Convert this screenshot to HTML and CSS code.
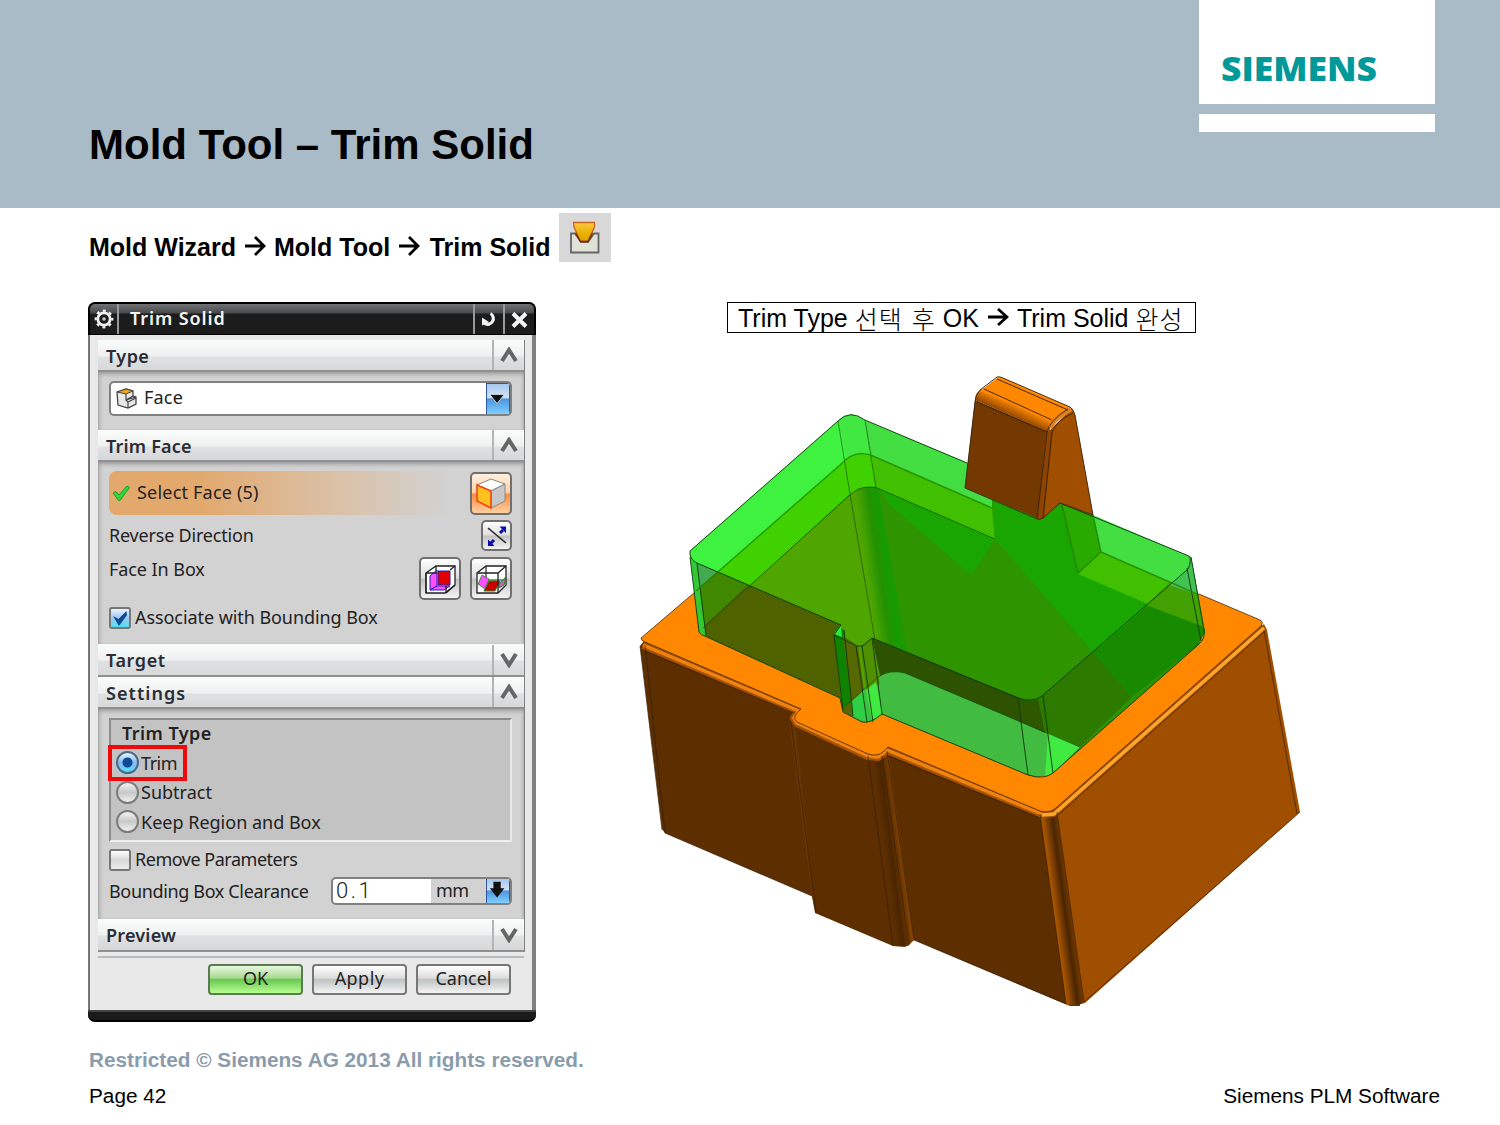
FILE: index.html
```html
<!DOCTYPE html>
<html lang="ko">
<head>
<meta charset="utf-8">
<title>Mold Tool – Trim Solid</title>
<link rel="stylesheet" href="styles.css">
</head>
<body>
<div class="slide">
  <header class="banner">
    <h1 class="title"><span class="t">Mold Tool – Trim Solid</span></h1>
    <div class="brand">
      <div class="brand-box">
        <svg class="brand-logo" width="200" height="60" viewBox="0 0 200 60"><text x="0" y="40.500" textLength="156" lengthAdjust="spacingAndGlyphs">SIEMENS</text></svg>
      </div>
      <div class="brand-strip"></div>
    </div>
  </header>

  <div class="path">
    <span class="t">Mold Wizard</span>
    <svg class="arrow" width="22" height="22" viewBox="0 0 22 22"><path d="M1 11H20M11 2L20 11L11 20"/></svg>
    <span class="t">Mold Tool</span>
    <svg class="arrow second" width="22" height="22" viewBox="0 0 22 22"><path d="M1 11H20M11 2L20 11L11 20"/></svg>
    <span class="t">Trim Solid</span>
    <div class="tool">
      <svg width="52" height="49" viewBox="0 0 52 49">
        <defs><linearGradient id="gold" x2="0" y2="1"><stop offset="0" stop-color="#ffc845"/><stop offset=".6" stop-color="#e9b000"/><stop offset="1" stop-color="#d9a400"/></linearGradient></defs>
        <path d="M12 20.500H16L22 29H29L35 20.500H39.500V39.500H12Z" fill="#dfe2d6" stroke="#666" stroke-width="1.800"/>
        <path d="M14.500 9.500H35.500V14L29 28.500H21.500L15 14Z" fill="url(#gold)" stroke="#c8641e" stroke-width="1.300"/>
        <path d="M16.500 20L21.500 28.500H29L33.500 20" fill="none" stroke="#7c2600" stroke-width="1.400"/>
      </svg>
    </div>
  </div>

  <main class="content">
    <section class="dialog">
      <div class="titlebar">
        <div class="tb-icon gear"><svg width="22" height="22" viewBox="0 0 22 22"><circle cx="11" cy="11" r="6.200" fill="none" stroke="#f2f2f2" stroke-width="2.800"/><circle cx="11" cy="11" r="8.300" fill="none" stroke="#f2f2f2" stroke-width="2.200" stroke-dasharray="3 3.520" stroke-dashoffset="1.500"/><circle cx="11" cy="11" r="1.800" fill="#ccc"/></svg></div>
        <div class="tb-name"><span class="t ls-9">Trim Solid</span></div>
        <div class="tb-icon"><svg width="20" height="20" viewBox="0 0 20 20"><path d="M11.500 4.500A5 5 0 1 1 5.500 14.500" fill="none" stroke="#f2f2f2" stroke-width="3.200"/><path d="M3 8.500V16.500L10 13Z" fill="#f2f2f2"/></svg></div>
        <div class="tb-icon last"><svg width="20" height="20" viewBox="0 0 20 20"><path d="M4 4.500L17 17.500M17 4.500L4 17.500" stroke="#f4f4f4" stroke-width="4"/></svg></div>
      </div>
      <div class="panel">
        <div class="head"><b class="t ls-4">Type</b><i><svg width="20" height="16" viewBox="0 0 20 16"><path d="M3 14L10 3L17 14"/></svg></i></div>
        <div class="body type">
          <div class="combo">
            <svg class="combo-icon" width="24" height="24" viewBox="0 0 24 24"><path d="M2 5L11 2L18 4V9L21 10V17L13 21L3 18Z" fill="#e8e8e8" stroke="#444" stroke-width="1.300"/><path d="M2 5L11 2L18 4L11 7Z" fill="#f0a818" stroke="#444"/><path d="M11 7V13L21 10M11 13L13 15V21M18 9L11 13M13 15L21 11" fill="none" stroke="#444" stroke-width="1.200"/></svg>
            <span class="t ls-2">Face</span>
            <svg class="drop" width="24" height="32" viewBox="0 0 24 32"><path d="M3 11H19L11 21Z" fill="#111" stroke="#e8f2ff" stroke-width=".8"/></svg>
          </div>
        </div>
        <div class="head"><b class="t ls-2">Trim Face</b><i><svg width="20" height="16" viewBox="0 0 20 16"><path d="M3 14L10 3L17 14"/></svg></i></div>
        <div class="body face">
          <div class="row select">
            <div class="select-bar"><svg width="20" height="20" viewBox="0 0 20 20"><path d="M2 10L5 8.500L8 12L16 3L18.500 4.500L9 17.500H7.500Z" fill="#2fd82f" stroke="#18a030"/></svg><span class="t ls-2">Select Face (5)</span></div>
            <div class="btn big hot"><svg width="36" height="36" viewBox="0 0 36 36"><path d="M4 10L18 4L32 9L18 16Z" fill="#fff" stroke="#888"/><path d="M18 16L32 9V26L18 33Z" fill="#c8c8c8" stroke="#888"/><path d="M4 10L18 16V33L4 26Z" fill="#ffc020" stroke="#f04010" stroke-width="1.500"/></svg></div>
          </div>
          <div class="row reverse"><span class="t ls-n2">Reverse Direction</span>
            <div class="btn small"><svg width="26" height="26" viewBox="0 0 26 26"><path d="M4 5L22 20" stroke="#222" stroke-width="1.600"/><path d="M16 10L19 7M10 17L7 20" stroke="#0a0aa8" stroke-width="3"/><path d="M15.500 3.500H22V10ZM4 16.500V23H10.500Z" fill="#0a0aa8"/></svg></div>
          </div>
          <div class="row inbox"><span class="t ls-n1">Face In Box</span>
            <div class="btn big"><svg width="36" height="36" viewBox="0 0 36 36"><path d="M4 12L14 5H33V24L23 32H4Z" fill="#fff" stroke="#222" stroke-width="1.300"/><path d="M8 15L15 9V25L8 29Z" fill="#ff50ff" stroke="#2020c0"/><path d="M8 29L15 25H28L22 29Z" fill="#ff50ff" stroke="#2020c0"/><path d="M16 10H28V24H16Z" fill="#e00000" stroke="#2020c0"/><path d="M4 12H15M24 25V32M14 5V10M4 32V12M24 32L33 24M28 9L33 5" fill="none" stroke="#222" stroke-width="1.300"/></svg></div>
            <div class="btn big"><svg width="36" height="36" viewBox="0 0 36 36"><path d="M4 12L13 5H33V24L25 32H4Z" fill="#fff" stroke="#222" stroke-width="1.300"/><path d="M13 5V19H33" fill="none" stroke="#222" stroke-width="1.200"/><path d="M9 14L16 18L12 28L5 23Z" fill="#ff50ff" stroke="#208020" stroke-width=".8"/><path d="M16 20H27L22 30H11Z" fill="#c80000" stroke="#208020"/><path d="M26 23L33 16L31 24L26 27Z" fill="#c860c8" stroke="#208020"/><path d="M4 12H25V32M25 12L33 5" fill="none" stroke="#222" stroke-width="1.300"/></svg></div>
          </div>
          <div class="row assoc"><div class="check on"><svg width="20" height="20" viewBox="0 0 20 20"><path d="M3 8L8.500 11L16.500 3L17 7L9 18Z" fill="#0a4a98"/></svg></div><span class="t ls-n1">Associate with Bounding Box</span></div>
        </div>
        <div class="head target"><b class="t ls-6">Target</b><i><svg width="20" height="16" viewBox="0 0 20 16"><path d="M3 2L10 13L17 2"/></svg></i></div>
        <div class="head"><b class="t ls-10">Settings</b><i><svg width="20" height="16" viewBox="0 0 20 16"><path d="M3 14L10 3L17 14"/></svg></i></div>
        <div class="body settings">
          <div class="group">
            <b class="group-name t ls-4">Trim Type</b>
            <div class="option marked"><span class="radio on"></span><span class="t ls-n5">Trim</span></div>
            <div class="option"><span class="radio"></span><span class="t">Subtract</span></div>
            <div class="option"><span class="radio"></span><span class="t">Keep Region and Box</span></div>
          </div>
          <div class="row remove"><div class="check"></div><span class="t ls-n5">Remove Parameters</span></div>
          <div class="row clearance"><span class="t ls-n3">Bounding Box Clearance</span>
            <div class="field"><span class="value">0.1</span><span class="unit">mm</span><svg class="drop" width="24" height="26" viewBox="0 0 24 26"><path d="M7 3H15V10H19L11 20L3 10H7Z" fill="#111"/></svg></div>
          </div>
        </div>
        <div class="head preview"><b class="t ls-2">Preview</b><i><svg width="20" height="16" viewBox="0 0 20 16"><path d="M3 2L10 13L17 2"/></svg></i></div>
      </div>
      <div class="actions"><div class="push ok"><span class="t">OK</span></div><div class="push"><span class="t ls-4">Apply</span></div><div class="push"><span class="t">Cancel</span></div></div>
      <div class="dialog-foot"></div>
    </section>

    <section class="figure">
      <div class="caption"><span class="t">Trim Type</span><span class="ko t">선택</span><span class="ko after t">후</span><span class="t">OK</span><svg class="arrow thin" width="22" height="22" viewBox="0 0 22 22"><path d="M1 11H20M11 3L20 11L11 19"/></svg><span class="t">Trim Solid</span><span class="ko t">완성</span></div>
      <svg class="model" width="680" height="645" viewBox="630 370 680 645">
        <defs>
          <linearGradient id="col1" gradientUnits="userSpaceOnUse" x1="878" y1="800" x2="902" y2="797"><stop offset="0" stop-color="#5c2e00"/><stop offset=".3" stop-color="#4a2500"/><stop offset="1" stop-color="#b05800"/></linearGradient>
          <linearGradient id="col2" gradientUnits="userSpaceOnUse" x1="1048" y1="860" x2="1070" y2="857"><stop offset="0" stop-color="#a85400"/><stop offset=".45" stop-color="#4a2500"/><stop offset="1" stop-color="#a04e00"/></linearGradient>
          <linearGradient id="fold" gradientUnits="userSpaceOnUse" x1="864" y1="560" x2="898" y2="555"><stop offset="0" stop-color="#50a600"/><stop offset=".15" stop-color="#3fa000"/><stop offset=".4" stop-color="#249000"/><stop offset=".65" stop-color="#149c00"/><stop offset="1" stop-color="#2e9400"/></linearGradient>
          <linearGradient id="lip" gradientUnits="userSpaceOnUse" x1="1015" y1="404" x2="1009" y2="417"><stop offset="0" stop-color="#ff8800"/><stop offset="1" stop-color="#803e00"/></linearGradient>
        </defs>
        <!-- block -->
        <path fill="#5c2e00" d="M640 646L645 640L800 705L888 750L1048 812L1080 1006L1070 1006L914 940L905 947L893 946L815 913L812 896L665 833L662 829Z"/>
        <path fill="#a04e00" d="M1052 812L1264 624L1267 630L1300 812L1085 1003L1074 1006Z"/>
        <path fill="url(#col2)" d="M1040 814L1057 812L1084 1002Q1076 1008 1066 1004Z"/>
        <path fill="url(#col1)" d="M868 757L888 750L914 940L908 946L893 946Z"/>
        <path fill="#693500" d="M789 722L795 722L815 910L812 896Z"/>
        <g fill="none" stroke-linejoin="round">
          <path stroke="#a85300" stroke-width="8" d="M643 645L799 711L794 718L797 723L868 756L878 757L887 750L1042 814L1053 813L1264 627"/>
          <path stroke="#f08210" stroke-width="3.500" d="M643 645L799 711L794 718L797 723L868 756L878 757L887 750L1042 814"/>
          <path stroke="#ffa52c" stroke-width="3.500" d="M1042 815L1054 814L1264 628"/>
        </g>
        <path fill="#ff8800" stroke="#4a2a08" stroke-width=".8" d="M641 638L695 592L1199 594L1260 620Q1264 622 1261 626L1057 807Q1050 814 1040 811L888 747L883 752Q877 757 868 754L797 722Q791 717 801 709L645 642Q641 641 641 638Z"/>
        <!-- cavity and trim sheet -->
        <path fill="#2e9400" d="M690 551L838 421L852 414L865 421L1060 503L1191 557L1205 632L1198 645L1053 773L1038 777L1028 775L882 714L872 722L862 722L843 712L840 698L707 637L699 632Z"/>
        <path fill="#3ff240" d="M690 551L838 421Q845 413 854 415L872 457L850 458L695 592Z"/>
        <path fill="#42de42" d="M865 420L992 473V508L872 456Z"/>
        <path fill="#42e842" d="M838 421Q850 409 865 420L872 457H847Z"/>
        <path fill="#3fd200" d="M695 592L840 465Q855 449 873 456L876 488L850 494L703 628Z"/>
        <path fill="#40c000" d="M871 455L992 508L995 540L876 488Z"/>
        <path fill="#50a600" d="M703 628L850 495L858 490L886 678L845 706L840 698L707 637Z"/>
        <path fill="url(#fold)" d="M851 493Q862 484 878 488L915 690H880Z"/>
        <path fill="#1aa600" d="M878 488L995 539L975 570Q970 576 965 570L890 505Z"/>
        <path fill="#1aa600" d="M992 500L1060 503L1078 573L1203 627L1205 632L1132 697L995 539Z"/>
        <path fill="#28aa00" d="M1062 504L1093 515L1101 552L1078 574Z"/>
        <path fill="#42de42" d="M1093 515L1191 557L1198 594L1101 552Z"/>
        <path fill="#40c000" d="M1101 552L1198 594L1204 628L1078 574Z"/>
        <path fill="#41bc41" d="M845 706L878 677Q890 670 905 673L1080 747L1053 773L1038 777L1028 775L882 714L872 722L862 722L843 712Z"/>
        <path fill="#40ea40" d="M1048 733L1080 747L1053 773L1045 776Z"/>
        <!-- near walls of the sheet -->
        <path fill="#4f6200" d="M699 564L841 625L834 634L841 698L707 637L703 628Z"/>
        <path fill="#42aa50" d="M697 563L717 572L695 592Z"/>
        <path fill="#3f8800" d="M717 572L748 585L703 627L696 592Z"/>
        <path fill="#35c835" d="M690 557L697 564L706 637L699 632Z"/>
        <path fill="#2d5200" d="M872 638L1020 698L1028 725L905 673Q890 669 880 676Z"/>
        <path fill="#2d7a00" d="M1017 698Q1032 704 1042 696L1098 648L1132 697L1080 747L1024 722Z"/>
        <path fill="#2d5800" d="M1017 698Q1030 703 1038 699L1045 733L1021 722Z"/>
        <path fill="#188a00" d="M1093 653L1190 569L1205 632L1198 645L1132 697Z"/>
        <path fill="#42a000" d="M1146 605L1169 583L1198 594L1204 627Z"/>
        <path fill="#42c050" d="M1169 585L1188 569L1191 557L1198 595Z"/>
        <path fill="#0f8200" d="M838 626L844 630L853 714L843 710L834 634Z"/>
        <path fill="#566800" d="M843 636L858 646L864 690L851 702Z"/>
        <path fill="#509000" d="M860 646L872 638L880 684L866 690Z"/>
        <path fill="#2fcf45" d="M851 702L864 690L869 722L853 716Z"/>
        <path fill="#566800" d="M845 706L851 702L853 717L843 712Z"/>
        <path fill="#40ea40" d="M866 690L876 682L882 714L872 722Z"/>
        <path fill="#2ee83c" d="M841 625L834 634L842 637Z"/>
        <g fill="none" stroke="#103810" stroke-width=".9" stroke-linejoin="round">
          <path d="M690 551L838 421Q850 409 865 420L967 463M1060 503L1189 556Q1192 560 1188 569L1042 696Q1032 703 1018 698L872 638L864 645Q859 648 853 644L834 635L841 625L697 563Q689 559 690 551M690 557L699 632Q700 635 707 637L840 698L843 712L862 722Q870 724 882 714L1028 775Q1044 780 1053 773L1198 645Q1206 638 1204 630L1191 557M697 563L706 636M1187 568L1201 641M1018 699L1028 775M1043 696L1053 773M834 635L843 710M856 646L867 722M872 638L882 714M862 646L873 722M844 630L853 716"/>
          <path stroke-opacity=".6" d="M838 421L850 494L875 640M865 420L876 488M703 628L850 495Q862 484 877 488L995 539M845 706L878 677Q890 669 905 673L1080 747"/>
          <path stroke="#208000" stroke-width="1.600" stroke-opacity=".7" d="M696 591L840 465Q855 448 873 456L992 508M1101 552L1197 594M1093 515L1101 552L1078 573M1062 505L1078 573"/>
        </g>
        <!-- boss -->
        <path fill="#743900" d="M975 400L1050 432L1040 519L965 488Z"/>
        <path fill="#a04e00" d="M1050 430L1072 408L1075 415L1093 515L1060 503L1043 519H1037Z"/>
        <path fill="#8c4400" d="M1046 430L1053 430L1044 518L1037 519Z"/>
        <path fill="url(#lip)" d="M975 400Q975 391 984 388L1054 419L1049 432Z"/>
        <path fill="#ff8800" d="M980 391L997 378Q999 376 1003 378L1070 407L1052 421Z"/>
        <path fill="none" stroke="#e08020" stroke-width="5" d="M1050 428Q1053 421 1060 416L1071 409"/>
        <g fill="none" stroke="#34200c" stroke-width=".9">
          <path d="M965 488L975 402Q975 396 980 390L997 377Q999 376 1003 378L1070 407Q1074 410 1075 415L1093 515L1060 503L1043 518Q1039 521 1035 518ZM984 389L1052 420M997 379L1068 410M977 402L1047 432M1047 432L1037 519M1052 432L1043 518M1047 432Q1049 421 1068 409M1052 432Q1057 420 1073 413"/>
          <path d="M645 645L665 833M665 833L812 896M640 646L662 830M791 722L816 912M868 756L893 946M882 756L909 945M887 751L914 940L1066 1004M1040 814L1066 1004M1057 812L1084 1002L1300 812M1264 630L1297 814M645 651L794 713M888 756L1038 817M1058 815L1264 632" stroke-opacity=".75"/>
        </g>
      </svg>
    </section>
  </main>

  <footer class="footer">
    <div class="legal"><span class="t">Restricted © Siemens AG 2013 All rights reserved.</span></div>
    <div class="foot-row"><span class="t">Page 42</span><span class="t">Siemens PLM Software</span></div>
  </footer>
</div>
</body>
</html>
```
FILE: styles.css
```css
* { box-sizing: border-box; }
body { margin: 0; background: #fff; color: #000; font-family: "Liberation Sans", "Noto Sans CJK KR", sans-serif; }
.slide { width: 1500px; height: 1125px; overflow: hidden; display: flex; flex-direction: column; }
.slide svg { display: block; flex: none; }
.t { white-space: nowrap; }
.ls-n5 { letter-spacing: -.48px; }
.ls-n3 { letter-spacing: -.35px; }
.ls-n2 { letter-spacing: -.2px; }
.ls-n1 { letter-spacing: -.07px; }
.ls-2 { letter-spacing: .2px; }
.ls-4 { letter-spacing: .45px; }
.ls-6 { letter-spacing: .6px; }
.ls-9 { letter-spacing: .9px; }
.ls-10 { letter-spacing: 1.05px; }

.banner { height: 208px; flex: none; background: #aabbc8; display: flex; justify-content: space-between; padding: 0 65px 0 89px; }
.title { margin: 120px 0 0; font-size: 42px; line-height: 50px; font-weight: 700; }
.brand { width: 236px; }
.brand-box { height: 104px; background: #fff; padding: 40px 0 0 22px; }
.brand-logo text { font: 800 33px "Open Sans", sans-serif; fill: #009999; }
.brand-strip { margin-top: 10px; height: 18px; background: #fff; }

.path { height: 94px; flex: none; display: flex; align-items: flex-start; padding: 23px 0 0 89px; font-size: 25px; line-height: 32px; font-weight: 700; }
.arrow { fill: none; stroke: #000; stroke-width: 2.800; margin: 4px 8px 0; }
.arrow.second { margin-right: 9.500px; }
.tool { margin: -18px 0 0 8.500px; width: 52px; height: 49px; background: #d8d8d8; }

.content { height: 720px; flex: none; display: flex; padding-left: 88px; }
.dialog { width: 448px; height: 720px; flex: none; background: #e9e9e9; border-left: 2px solid #777; border-right: 4px solid #808080; border-radius: 8px; font: 18px/24px "Noto Sans", sans-serif; color: #222; display: flex; flex-direction: column; }
.titlebar { height: 33px; flex: none; margin: 0 -4px 0 -2px; border: solid #000; border-width: 2px 2px 1px; border-radius: 7px 7px 0 0; background: linear-gradient(#707274, #48494b 9px, #1c1c1c 10px, #1c1c1c); display: flex; align-items: center; color: #f4f4f4; padding-right: 1px; }
.tb-icon { width: 30px; height: 30px; border-left: 2px solid #999; display: grid; place-items: center; }
.tb-icon.gear { width: 29px; border-left: 0; border-right: 2px solid #999; }
.tb-name { flex: 1; padding: 0 0 2px 11px; font-weight: 600; }
.panel { margin: 5px 7px 0 8px; border-right: 1px solid #808080; }
.head { height: 32px; display: flex; align-items: center; justify-content: space-between; background: linear-gradient(#fafbfb, #eff1f1 16px, #dfe1e2 17px, #d6d8da); border-bottom: 2px solid #909090; padding-left: 8px; }
.head b { font-weight: 600; color: #2a2d35; padding-top: 1px; }
.head i { width: 32px; height: 30px; border-left: 2px solid #b4b4b4; display: grid; place-items: center; }
.head i path { fill: none; stroke: #666; stroke-width: 4; }
.body { background: #d2d2d2; padding: 0 12px 0 11px; box-shadow: inset 2px 3px 4px -1px #999, inset -2px 0 3px -1px #aaa; }
.body.type { height: 58px; padding-top: 9px; }
.combo { height: 35px; background: #fff; border: 2px solid #808080; border-radius: 5px; display: flex; align-items: center; padding-left: 4px; overflow: hidden; }
.combo .t { flex: 1; padding: 0 0 4px 5px; }
.drop { background: linear-gradient(#a8c8ee, #d0e2f8 45%, #4c94de 50%, #80d0ff); border: 1px solid #3058a0; }
.body.face { height: 182px; padding-top: 9px; }
.row { display: flex; align-items: center; }
.select { height: 44px; justify-content: space-between; }
.select-bar { width: 350px; height: 44px; border-radius: 8px; display: flex; align-items: center; gap: 6px; padding-left: 2px; background: linear-gradient(90deg, #e2a86c 0, #e2a86c 90px, #dcbc9c 200px, #d2d2d2 340px); }
.select-bar .t { padding-bottom: 2px; }
.btn { border: 2px solid #707070; border-radius: 5px; background: linear-gradient(#fff, #dedede 48%, #c2c2c2 52%, #f4f4f4); display: grid; place-items: center; flex: none; }
.btn.big { width: 42px; height: 43px; }
.btn.small { width: 31px; height: 31px; }
.btn.hot { background: linear-gradient(#fff0e0, #ffd0a8 48%, #ff8c40 52%, #ffd0a0); }
.reverse { height: 41px; justify-content: space-between; }
.reverse .t { padding-bottom: 2px; }
.inbox { height: 45px; gap: 9px; }
.inbox .t { flex: 1; padding-bottom: 20px; }
.assoc { height: 33px; gap: 4px; }
.assoc .t { padding-bottom: 2px; }
.check { width: 22px; height: 22px; flex: none; border: 2px solid #777; border-radius: 3px; background: linear-gradient(#fff, #d8d8d8 50%, #eee); }
.check.on { background: linear-gradient(#e8f4ff, #a0c8f0 50%, #50e0f0); }
.check svg { margin: -1px; }
.head.target { height: 33px; }
.body.settings { height: 210px; padding-top: 9px; }
.group { height: 124px; background: #c3c3c3; border: 2px solid #8c8c8c; border-right-color: #e8e8e8; border-bottom-color: #f0f0f0; padding: 1px 0 0 5px; }
.group-name { display: block; height: 27px; line-height: 25px; padding-left: 6px; color: #222; font-weight: 600; }
.option { height: 29.500px; display: flex; align-items: center; gap: 2px; }
.option.marked { outline: 4px solid #ee0a0a; outline-offset: -1px; width: 73px; margin-left: -5px; padding-left: 5px; }
.radio { width: 23px; height: 23px; flex: none; border: 2px solid #7c7c7c; border-radius: 50%; background: linear-gradient(#f4f4f4, #c8c8c8 50%, #f0f0f0); }
.radio.on { border-color: #4a6a90; background: radial-gradient(circle, #0a4a98 0 4.500px, transparent 5.500px), linear-gradient(#eef6ff, #88b8e8 50%, #50e0ff); }
.remove { height: 35px; gap: 4px; }
.remove .t { padding-bottom: 2px; }
.clearance { height: 28px; justify-content: space-between; }
.field { width: 181px; height: 28px; border: 2px solid #808080; border-radius: 5px; background: #fff; display: flex; align-items: center; overflow: hidden; }
.value { width: 98px; padding-left: 3px; font-family: Roboto, sans-serif; font-size: 22px; font-weight: 300; letter-spacing: 2.500px; }
.unit { flex: 1; height: 24px; line-height: 23px; background: #d2d2d2; padding-left: 5px; letter-spacing: -.5px; }
.head.preview { height: 33px; }
.actions { margin: 4px 8px 0 8px; border-top: 2px solid #bbb; height: 54px; padding: 6px 13px 0 0; display: flex; justify-content: flex-end; gap: 9px; }
.push { width: 95px; height: 31px; border: 2px solid #777; border-radius: 4px; background: linear-gradient(#fff, #dcdcdc 45%, #bfc3c3 50%, #f4f4f4); display: grid; place-items: center; line-height: 23px; padding-bottom: 2px; }
.push.ok { border-color: #5a7a50; background: linear-gradient(#e8f8e0, #a8d890 45%, #68c850 50%, #b8ff90); }
.dialog-foot { flex: 1; margin: 0 -4px 0 -2px; background: #1b1b1b; border-top: 2px solid #444; border-bottom: 2px solid #000; border-radius: 0 0 7px 7px; }

.figure { margin-left: 94px; width: 680px; }
.caption { margin-left: 97px; width: 469px; height: 31px; border: 1px solid #000; display: flex; align-items: center; padding: 1px 0 0 10px; font-size: 25px; line-height: 28px; }
.arrow.thin { margin: -2px 8px 0 8px; }
.ko { font-family: "Noto Sans CJK KR", sans-serif; font-weight: 300; font-size: 25px; letter-spacing: 1px; margin: -1px 0 0 7px; }
.ko.after { margin: -1px 7px 0 9px; }
.model { margin-top: 37px; }

.footer { padding: 25px 60px 0 89px; font-size: 20.750px; }
.legal { height: 36px; line-height: 26px; font-weight: 700; color: #8a9cab; }
.foot-row { display: flex; justify-content: space-between; line-height: 26px; }
```
